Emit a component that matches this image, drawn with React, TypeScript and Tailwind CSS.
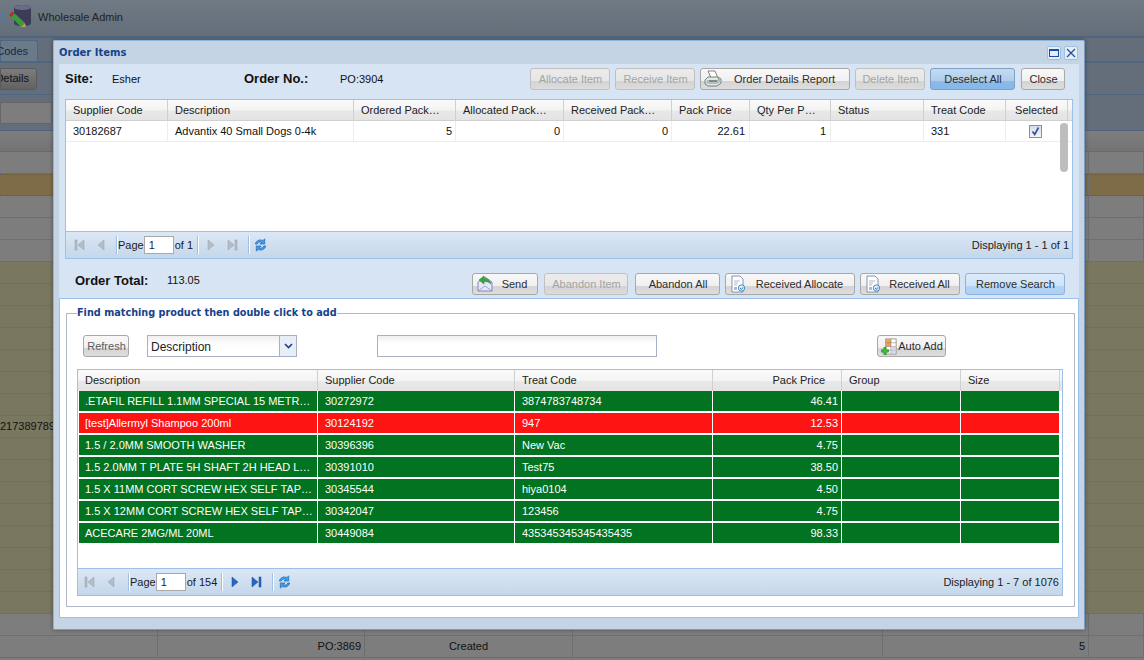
import React from "react";

const hdrBg = "bg-[linear-gradient(#fafafa_0%,#f4f4f4_50%,#e8e8e8_55%,#e4e4e4_100%)]";

function Logo() {
  return (
    <svg width="24" height="24" viewBox="0 0 24 24">
      <path d="M5 4c0-2.200 4-3 8.500-3S22 1.800 22 4v15c0 2.200-4 3-8.500 3S5 21.200 5 19z" fill="#3c3c58" />
      <ellipse cx="13.500" cy="3.500" rx="8.500" ry="2.500" fill="#6c6c88" />
      <path d="M0 11l3.500-3.500 12.500 11.500-4 4z" fill="#3f9a3c" />
      <path d="M0 11l3.500-3.500 2 2-3.500 3.500z" fill="#b03030" />
      <path d="M12 23l4-4 1 4z" fill="#c89a60" />
    </svg>
  );
}

function Printer() {
  return (
    <svg width="18" height="18" viewBox="0 0 18 18" className="shrink-0">
      <path d="M4 1h7l3 7H7z" fill="#fff" stroke="#666" strokeWidth=".8" />
      <path d="M1 10l3-3h10l3 2v4l-4 3H4l-3-2z" fill="#e4e8e8" stroke="#5c6468" strokeWidth=".8" />
      <path d="M3 10h11l2-1v3l-3 2H4l-2-1z" fill="#b4bec0" />
      <path d="M5 11h8" stroke="#4d5558" strokeWidth="1" />
      <circle cx="14.500" cy="9" r=".8" fill="#4b9a3a" />
    </svg>
  );
}
function SendIcon() {
  return (
    <svg width="18" height="18" viewBox="0 0 18 18" className="shrink-0">
      <path d="M2 7l7-5 7 5v9H2z" fill="#e6e6f8" stroke="#6f6fb0" strokeWidth=".8" />
      <path d="M2 16l7-5 7 5" fill="none" stroke="#8a8ac4" strokeWidth=".7" />
      <path d="M3 5l5-4v2.500c3 0 6 1.500 7 5.500-2-2-4-2.500-7-2.500V9z" fill="#35a83a" stroke="#1c7a24" strokeWidth=".5" />
    </svg>
  );
}
function DocIcon() {
  return (
    <svg width="18" height="18" viewBox="0 0 18 18" className="shrink-0">
      <path d="M3 1h8l3 3v13H3z" fill="#fff" stroke="#6a78a0" strokeWidth=".8" />
      <path d="M5 6h6M5 8h4M5 10h3" stroke="#9aa6c4" strokeWidth=".8" />
      <rect x="5" y="12" width="3" height="3" fill="#aeb8d4" />
      <circle cx="12.500" cy="13" r="3.200" fill="#d8ecf8" stroke="#3a86c0" strokeWidth=".9" />
      <path d="M11 13l1.500 1.400L14 12.400" fill="none" stroke="#2a70a8" strokeWidth=".9" />
    </svg>
  );
}
function AutoAddIcon() {
  return (
    <svg width="17" height="17" viewBox="0 0 18 18" className="shrink-0">
      <rect x="5" y="1" width="11" height="16" fill="#fff" stroke="#8a7f78" strokeWidth=".8" />
      <rect x="5" y="1" width="5.500" height="8" fill="#f0a050" />
      <path d="M10.500 1v16M5 5h11M5 9h11M5 13h11" stroke="#8a7f78" strokeWidth=".6" />
      <rect x="10.500" y="9" width="5.500" height="8" fill="#c8c8f0" opacity=".7" />
      <path d="M3 10h2.500v2.500H8V15H5.500v2.500H3V15H.5v-2.500H3z" fill="#3fc03f" stroke="#1a7a1a" strokeWidth=".6" />
    </svg>
  );
}

function Btn({ w, label, disabled, icon, active, light, muted }: { w: string; label: string; disabled?: boolean; icon?: React.ReactNode; active?: boolean; light?: boolean; muted?: boolean }) {
  const bg = active
    ? "bg-[linear-gradient(#c4dbf2_0%,#b0cdec_58%,#8bbbe8_60%,#84b8ea_100%)] border-[#7f9fc4]"
    : light
    ? "bg-[linear-gradient(#dcebfa_0%,#cfe3f8_58%,#b4d4f4_60%,#aed0f2_100%)] border-[#8fb3dc]"
    : disabled
    ? "bg-[linear-gradient(#ebebeb_0%,#e6e6e6_60%,#d4d4d4_62%,#dcdcdc_100%)] border-[#c0c0c0]"
    : "bg-[linear-gradient(#f8f8f8_0%,#f0f0f0_60%,#d4d4d4_62%,#dedede_100%)] border-[#a8a8a8]";
  const color = disabled ? "text-[#a4a4a4]" : muted ? "text-[#5c5c5c]" : "text-[#2c2c2c]";
  return (
    <button className={`${w} h-[22px] rounded-[3px] border flex items-center pl-[3px] pr-[2px] shrink-0 ${bg} ${color}`}>
      {icon}
      <span className="flex-1 text-center text-[11px] leading-none whitespace-nowrap">{label}</span>
    </button>
  );
}

function Sep({ m }: { m: string }) {
  return <div className={`w-px h-[18px] bg-[#9cc0e8] border-r border-white box-content shrink-0 ${m}`} />;
}

function Tri({ dir, end, active }: { dir: "l" | "r"; end?: boolean; active?: boolean }) {
  const fill = active ? "#2a66c0" : "#b4bcc6";
  const stroke = active ? "#1a4ea0" : "#98a0aa";
  return (
    <svg width="14" height="14" viewBox="0 0 14 14" className="shrink-0">
      {dir === "l" ? (
        <>
          {end && <rect x="2" y="2" width="2" height="10" fill={fill} stroke={stroke} strokeWidth=".5" />}
          <path d="M11 2v10L5 7z" fill={fill} stroke={stroke} strokeWidth=".5" />
        </>
      ) : (
        <>
          <path d="M3 2v10l6-5z" fill={fill} stroke={stroke} strokeWidth=".5" />
          {end && <rect x="10" y="2" width="2" height="10" fill={fill} stroke={stroke} strokeWidth=".5" />}
        </>
      )}
    </svg>
  );
}

function Refresh() {
  return (
    <svg width="15" height="16" viewBox="0 0 16 16" className="shrink-0">
      <path d="M2.500 7C3 3.500 7 1.500 10.500 3.200L12.500 1.500V7H7.500L9.300 5.200C7 4.200 5 5.300 4.500 7z" fill="#3f9ee8" stroke="#1a64b8" strokeWidth=".7" />
      <path d="M13.500 9C13 12.500 9 14.500 5.500 12.800L3.500 14.500V9H8.500L6.700 10.800C9 11.800 11 10.700 11.500 9z" fill="#3f9ee8" stroke="#1a64b8" strokeWidth=".7" />
    </svg>
  );
}

function Pager({ total, display, active, ml, sepM }: { total: string; display: string; active?: boolean; ml: string; sepM: string }) {
  return (
    <div className="h-[27px] flex items-center border-t border-[#9cc0e8] bg-[linear-gradient(#dbe7f5,#c4d7ea)] text-[11px] text-[#1c1c1c] shrink-0">
      <div className={`flex items-center ${ml} gap-[6px]`}>
        <Tri dir="l" end />
        <Tri dir="l" />
      </div>
      <Sep m={sepM} />
      <span>Page</span>
      <div className="w-[30px] h-[18px] bg-white border border-[#a9a9a9] mr-[1px] pl-[4px] text-[11px] leading-[16px]">1</div>
      <span>{total}</span>
      <Sep m="ml-[4px]" />
      <div className="flex items-center gap-[6px] ml-[6px]">
        <Tri dir="r" active={active} />
        <Tri dir="r" end active={active} />
      </div>
      <Sep m="ml-[9px]" />
      <div className="ml-[3px]"><Refresh /></div>
      <span className="ml-auto pr-[3px]">{display}</span>
    </div>
  );
}

const topCols = "grid-cols-[102px_186px_102px_108px_108px_78px_81px_93px_82px_62px_5px]";
const topHead = ["Supplier Code", "Description", "Ordered Pack\u2026", "Allocated Pack\u2026", "Received Pack\u2026", "Pack Price", "Qty Per P\u2026", "Status", "Treat Code", "Selected"];
const topRow = ["30182687", "Advantix 40 Small Dogs 0-4k", "5", "0", "0", "22.61", "1", "", "331"];

function TopGrid() {
  return (
    <div className="mx-[6px] h-[160px] border border-[#9cc0e8] bg-white flex flex-col shrink-0">
      <div className="flex-1 relative min-h-0">
        <div className={`grid ${topCols} h-[21px] ${hdrBg} border-b border-[#d0d0d0] text-[11px] text-[#222]`}>
          {topHead.map((h, i) => (
            <div key={h} className={`flex items-center border-r border-[#d0d0d0] ${i === 9 ? "justify-center" : "px-[7px]"} whitespace-nowrap`}>{h}</div>
          ))}
          <div />
        </div>
        <div className={`grid ${topCols} h-[21px] border-b border-[#ededed] text-[11px] text-[#111]`}>
          {topRow.map((c, i) => (
            <div key={i} className={`flex items-center border-r border-[#ededed] whitespace-nowrap ${i >= 2 && i <= 4 ? "justify-end pr-[3px]" : i >= 5 && i <= 6 ? "justify-end pr-[4px]" : "px-[7px]"}`}>{c}</div>
          ))}
          <div className="flex items-center justify-center border-r border-[#ededed] pr-[3px]">
            <span className="w-[13px] h-[13px] border border-[#8a8f98] bg-[linear-gradient(#d8dde4,#f4f4f4)] flex items-center justify-center">
              <svg width="11" height="11" viewBox="0 0 11 11"><path d="M2.500 5.500l2.200 3L8.500 1.500" fill="none" stroke="#2a4fa0" strokeWidth="1.6" /></svg>
            </span>
          </div>
          <div />
        </div>
        <div className="absolute right-[4px] top-[23px] w-[8px] h-[49px] rounded-[4px] bg-[#bdbdbd]" />
      </div>
      <Pager total="of 1" display="Displaying 1 - 1 of 1" ml="ml-[7px]" sepM="ml-[9px]" />
    </div>
  );
}

const headCols = "grid-cols-[240px_197px_198px_129px_119px_99px]";
const rowCols = "grid-cols-[239px_197px_198px_129px_119px_99px]";
const botHead = ["Description", "Supplier Code", "Treat Code", "Pack Price", "Group", "Size"];
const rows: { c: string[]; red?: boolean }[] = [
  { c: [".ETAFIL REFILL 1.1MM SPECIAL 15 METR\u2026", "30272972", "3874783748734", "46.41"] },
  { c: ["[test]Allermyl Shampoo 200ml", "30124192", "947", "12.53"], red: true },
  { c: ["1.5 / 2.0MM SMOOTH WASHER", "30396396", "New Vac", "4.75"] },
  { c: ["1.5 2.0MM T PLATE 5H SHAFT 2H HEAD L\u2026", "30391010", "Test75", "38.50"] },
  { c: ["1.5 X 11MM CORT SCREW HEX SELF TAP\u2026", "30345544", "hiya0104", "4.50"] },
  { c: ["1.5 X 12MM CORT SCREW HEX SELF TAP\u2026", "30342047", "123456", "4.75"] },
  { c: ["ACECARE 2MG/ML 20ML", "30449084", "435345345345435435", "98.33"] },
];

function BottomGrid() {
  return (
    <div className="ml-[10px] mr-[11px] mt-[12px] h-[227px] border border-[#9cc0e8] bg-white flex flex-col">
      <div className="flex-1 min-h-0">
        <div className={`grid ${headCols} h-[21px] ${hdrBg} text-[11px] text-[#222]`}>
          {botHead.map((h, i) => (
            <div key={h} className={`flex items-center border-r border-[#d0d0d0] px-[7px] ${i === 3 ? "justify-end pr-[16px]" : ""}`}>{h}</div>
          ))}
        </div>
        {rows.map((r, idx) => (
          <div key={idx} className={`grid ${rowCols} h-[20px] mb-[2px] ml-[1px] w-[981px] text-[11px] text-white ${r.red ? "bg-[#ff1414]" : "bg-[#027320]"}`}>
            {[0, 1, 2, 3, 4, 5].map((i) => (
              <div key={i} className={`flex items-center border-r border-white whitespace-nowrap ${i === 3 ? "justify-end pr-[3px]" : i === 0 ? "px-[6px]" : "px-[7px]"}`}>{r.c[i] ?? ""}</div>
            ))}
          </div>
        ))}
      </div>
      <Pager total="of 154" display="Displaying 1 - 7 of 1076" active ml="ml-[5px]" sepM="ml-[11px]" />
    </div>
  );
}

function Modal() {
  return (
    <div className="absolute left-[53px] top-[40px] w-[1032px] h-[590px] border border-[#8fb3dc] border-r-[#7a9cc4] border-b-[#7a9cc4] bg-[#c4d4e4] flex flex-col rounded-[2px] font-['Liberation_Sans',Arial,sans-serif] shadow-[0_0_4px_rgba(0,0,0,.35)]">
      <div className="h-[23px] flex items-center pl-[5px] pr-[6px] shrink-0">
        <span className="font-['DejaVu_Sans',sans-serif] font-bold text-[10px] text-[#15428b]">Order Items</span>
        <div className="ml-auto flex gap-[3px]">
          <div className="w-[14px] h-[14px] bg-[#e4eefa] border border-[#9cc0e8] rounded-[2px] flex items-center justify-center">
            <div className="w-[10px] h-[8px] border border-[#1a4ea0] border-t-2" />
          </div>
          <div className="w-[14px] h-[14px] bg-[#e4eefa] border border-[#9cc0e8] rounded-[2px] flex items-center justify-center">
            <svg width="10" height="10" viewBox="0 0 10 10"><path d="M1 1l8 8M9 1L1 9" stroke="#1a4ea0" strokeWidth="1.200" /></svg>
          </div>
        </div>
      </div>
      <div className="mx-[5px] mb-[11px] flex-1 min-h-0 bg-[#d7e4f3] flex flex-col">
        <div className="h-[30px] mb-[5px] flex items-center shrink-0 text-[#111]">
          <span className="w-[47px] pl-[6px] font-bold text-[13px]">Site:</span>
          <span className="w-[138px] pl-[6px] text-[11px]">Esher</span>
          <span className="w-[96px] font-bold text-[13px] whitespace-nowrap">Order No.:</span>
          <span className="text-[11px]">PO:3904</span>
          <div className="ml-auto flex gap-[5px] pr-[14px]">
            <Btn w="w-[80px]" label="Allocate Item" disabled />
            <Btn w="w-[80px]" label="Receive Item" disabled />
            <Btn w="w-[150px]" label="Order Details Report" icon={<Printer />} />
            <Btn w="w-[70px]" label="Delete Item" disabled />
            <Btn w="w-[85px] mr-[1px]" label="Deselect All" active />
            <Btn w="w-[44px]" label="Close" />
          </div>
        </div>
        <TopGrid />
        <div className="h-[39px] pt-[4px] flex items-center shrink-0 text-[#111]">
          <span className="w-[92px] pl-[16px] font-bold text-[13px] whitespace-nowrap">Order Total:</span>
          <span className="pl-[16px] text-[11px]">113.05</span>
          <div className="ml-auto flex gap-[5px] pr-[14px] pt-[7px]">
            <Btn w="w-[66px] mr-[1px]" label="Send" icon={<SendIcon />} />
            <Btn w="w-[84px] mr-[2px]" label="Abandon Item" disabled />
            <Btn w="w-[85px]" label="Abandon All" />
            <Btn w="w-[130px]" label="Received Allocate" icon={<DocIcon />} />
            <Btn w="w-[100px]" label="Received All" icon={<DocIcon />} />
            <Btn w="w-[100px]" label="Remove Search" light />
          </div>
        </div>
        <div className="h-[320px] bg-white border border-[#9cc0e8] pl-[6px] pr-[3px] pb-[10px] pt-[8px] shrink-0 flex">
          <fieldset className="w-full border border-[#b0b8c8] min-w-0">
            <legend className="ml-[10px] font-['DejaVu_Sans',sans-serif] font-bold text-[9.7px] leading-[12px] text-[#15428b]">Find matching product then double click to add</legend>
            <div className="flex items-center mt-[16px] h-[22px]">
              <div className="ml-[16px]"><Btn w="w-[46px]" label="Refresh" muted /></div>
              <div className="ml-[18px] w-[150px] h-[22px] border border-[#a9b0c4] flex bg-[linear-gradient(#f0f0f0,#fff_50%)]">
                <span className="flex-1 text-[12px] text-[#222] pl-[3px] leading-[22px]">Description</span>
                <span className="w-[17px] border-l border-[#a9b0c4] bg-[#e8eef6] flex items-center justify-center">
                  <svg width="9" height="6" viewBox="0 0 9 6"><path d="M1 1l3.500 3.500L8 1" fill="none" stroke="#15428b" strokeWidth="1.6" /></svg>
                </span>
              </div>
              <div className="ml-[80px] w-[280px] h-[22px] border border-[#a9b0c4] bg-[linear-gradient(#efefef,#fff_40%)]" />
              <div className="ml-[220px]"><Btn w="w-[69px]" label="Auto Add" icon={<AutoAddIcon />} /></div>
            </div>
            <BottomGrid />
          </fieldset>
        </div>
      </div>
    </div>
  );
}

const G = "bg-[#7d7d7d] border-b border-[#6e6e6e]";
const BGROWS: { cls: string; cells?: string[]; line?: boolean }[] = [
  { cls: G, line: true },
  { cls: "bg-[#7e6b48] border-y border-dotted border-[#4d5a80]", line: true },
  { cls: G, line: true },
  { cls: G, line: true },
  { cls: G, line: true },
  ...Array.from({ length: 16 }, (_, i) => ({ cls: "bg-[#7a7760] border-b border-[#6e6e6e]", cells: i === 7 ? ["2173897892"] : undefined })),
  { cls: G, line: true },
  { cls: G, line: true, cells: ["", "PO:3869", "Created", "", "5"] },
];

export default function App() {
  return (
    <div className="relative w-[1144px] h-[660px] overflow-hidden bg-[#7d7d7d] font-['Liberation_Sans',Arial,sans-serif] text-[11px] text-[#111]">
      <div className="h-[38px] flex items-start bg-[linear-gradient(#6f7a84,#636e7a)] border-b-2 border-[#4f6680] text-[#222]">
        <div className="w-[1px] h-[12px] mt-[11px] ml-[2px] bg-[#4f7aa8]" />
        <div className="ml-[6px] mt-[4px]"><Logo /></div>
        <span className="ml-[5px] mt-[11px] text-[11px] leading-[13px]">Wholesale Admin</span>
      </div>
      <div className="h-[25px] flex items-end bg-[#636e7a] border-b-2 border-[#4f6680]">
        <div className="w-[38px] h-[21px] border border-[#4f6680] border-b-0 rounded-tr-[3px] bg-[#6b7a88] text-[#12284a] flex items-center justify-end pr-[9px] text-[11px]">Codes</div>
      </div>
      <div className="h-[32px] flex items-center bg-[#636e7a] border-b border-[#4f6680]">
        <div className="w-[37px] h-[22px] overflow-hidden rounded-r-[3px] border border-[#5a5a5a] bg-[linear-gradient(#7c7c7c,#6c6c6c_60%,#626262)] flex items-center justify-end pr-[7px]">Details</div>
      </div>
      <div className="h-[36px] flex items-center bg-[#636e7a] border-b border-[#4f6680]">
        <div className="w-[52px] h-[22px] bg-[#7d7d7d] border border-[#666]" />
      </div>
      <div className="h-[21px] bg-[linear-gradient(#7d7d7d,#737373)] border-b border-[#6a6a6a]" />
      {BGROWS.map((r, i) => (
        <div key={i} className={`h-[22px] grid grid-cols-[158px_207px_208px_310px_206px_1fr] text-[11px] ${r.cls}`}>
          {[0, 1, 2, 3, 4, 5].map((c) => (
            <div
              key={c}
              className={`flex items-center whitespace-nowrap border-r ${r.line ? "border-[#6e6e6e]" : "border-transparent"} ${c === 1 || c === 4 ? "justify-end pr-[3px]" : c === 2 ? "justify-center" : ""}`}
            >
              {r.cells?.[c] ?? ""}
            </div>
          ))}
        </div>
      ))}
      <Modal />
    </div>
  );
}
